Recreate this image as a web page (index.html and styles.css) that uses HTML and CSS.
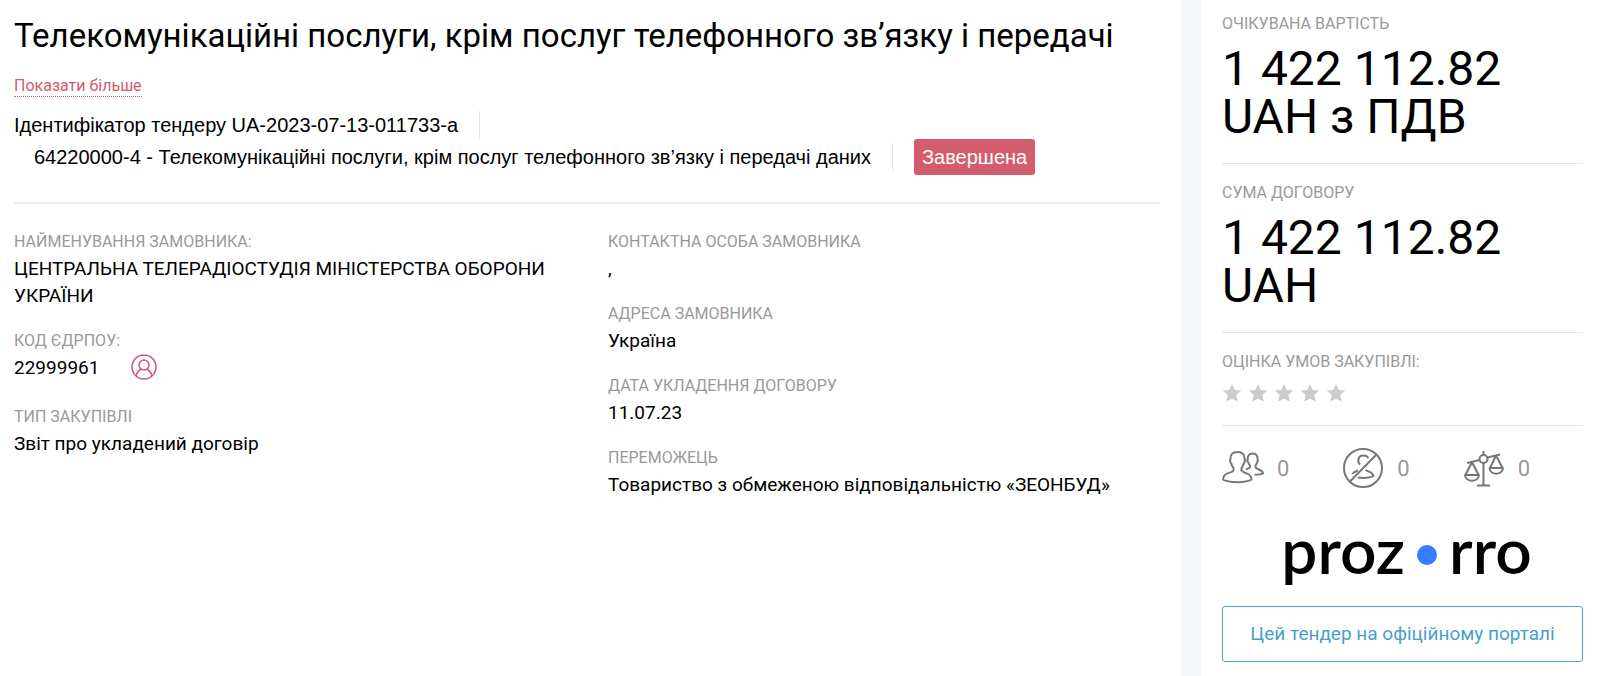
FILE: index.html
```html
<!DOCTYPE html>
<html lang="uk">
<head>
    <meta charset="UTF-8">
    <meta name="viewport" content="width=device-width, initial-scale=1.0">
    <title>Телекомунікаційні послуги</title>
    <link rel="stylesheet" href="styles.css">
</head>
<body>
    <main class="tender">
        <h1 class="title">Телекомунікаційні послуги, крім послуг телефонного зв’язку і передачі</h1>
        <button type="button" class="show-more">Показати більше</button>

        <div class="meta">
            <div class="meta-row">
                <span class="meta-item">Ідентифікатор тендеру UA-2023-07-13-011733-a</span>
            </div>
            <div class="meta-row">
                <span class="meta-item code">64220000-4 - Телекомунікаційні послуги, крім послуг телефонного зв’язку і передачі даних</span>
                <span class="status">Завершена</span>
            </div>
        </div>

        <div class="details">
            <dl class="column">
                <div class="field">
                    <dt>НАЙМЕНУВАННЯ ЗАМОВНИКА:</dt>
                    <dd>ЦЕНТРАЛЬНА ТЕЛЕРАДІОСТУДІЯ МІНІСТЕРСТВА ОБОРОНИ УКРАЇНИ</dd>
                </div>
                <div class="field">
                    <dt>КОД ЄДРПОУ:</dt>
                    <dd class="with-icon">
                        22999961
                        <a href="#" class="profile" aria-label="Профіль замовника">
                            <svg width="26" height="26" viewBox="0 0 26 26">
                                <circle cx="13" cy="13" r="12"/>
                                <circle cx="13" cy="11" r="5"/>
                                <path d="M5 22c1-4 3-6 5.500-6.800M21 22c-1-4-3-6-5.500-6.800"/>
                            </svg>
                        </a>
                    </dd>
                </div>
                <div class="field">
                    <dt>ТИП ЗАКУПІВЛІ</dt>
                    <dd>Звіт про укладений договір</dd>
                </div>
            </dl>
            <dl class="column">
                <div class="field">
                    <dt>КОНТАКТНА ОСОБА ЗАМОВНИКА</dt>
                    <dd>,</dd>
                </div>
                <div class="field">
                    <dt>АДРЕСА ЗАМОВНИКА</dt>
                    <dd>Україна</dd>
                </div>
                <div class="field">
                    <dt>ДАТА УКЛАДЕННЯ ДОГОВОРУ</dt>
                    <dd>11.07.23</dd>
                </div>
                <div class="field">
                    <dt>ПЕРЕМОЖЕЦЬ</dt>
                    <dd>Товариство з обмеженою відповідальністю «ЗЕОНБУД»</dd>
                </div>
            </dl>
        </div>
    </main>

    <aside class="sidebar">
        <section class="block">
            <h2 class="label">ОЧІКУВАНА ВАРТІСТЬ</h2>
            <p class="price">1 422 112.82 UAH з ПДВ</p>
        </section>
        <section class="block">
            <h2 class="label">СУМА ДОГОВОРУ</h2>
            <p class="price">1 422 112.82 UAH</p>
        </section>
        <section class="block">
            <h2 class="label">ОЦІНКА УМОВ ЗАКУПІВЛІ:</h2>
            <div class="stars">
                <svg viewBox="0 0 20 20"><path d="M10 1l2.700 6 6.600.600-5 4.400 1.500 6.500L10 15.700l-5.800 2.800L5.700 12l-5-4.400L7.300 7z"/></svg>
                <svg viewBox="0 0 20 20"><path d="M10 1l2.700 6 6.600.600-5 4.400 1.500 6.500L10 15.700l-5.800 2.800L5.700 12l-5-4.400L7.300 7z"/></svg>
                <svg viewBox="0 0 20 20"><path d="M10 1l2.700 6 6.600.600-5 4.400 1.500 6.500L10 15.700l-5.800 2.800L5.700 12l-5-4.400L7.300 7z"/></svg>
                <svg viewBox="0 0 20 20"><path d="M10 1l2.700 6 6.600.600-5 4.400 1.500 6.500L10 15.700l-5.800 2.800L5.700 12l-5-4.400L7.300 7z"/></svg>
                <svg viewBox="0 0 20 20"><path d="M10 1l2.700 6 6.600.600-5 4.400 1.500 6.500L10 15.700l-5.800 2.800L5.700 12l-5-4.400L7.300 7z"/></svg>
            </div>
        </section>

        <ul class="counters">
            <li>
                <svg viewBox="0 0 42 42">
                    <path d="M15.500 5C10.500 5 8 7.500 8.500 12.500c-1 .5-.5 3 .8 4 .4 2 1.200 3 2.200 4.500v2.500C9 27 1.500 25 1 32.500c5 3.500 23.500 3.500 28.500 0C29 25 21.500 27 19.500 23.500V21c1-1.500 1.800-2.500 2.200-4.500 1.300-1 1.800-3.500.8-4C23 7.500 20.500 5 15.500 5z"/>
                    <path d="M24 22.500c2-.7 3.500-1.200 4-2.200v-1.800c-1-1-1.600-2-1.800-3.300-.9-.7-1.200-2-.5-2.500-.2-4 1.500-6.200 5-6.200s5.200 2.200 4.800 6.200c.7.500.4 1.800-.4 2.500-.2 1.300-.8 2.300-1.600 3.300v1.800c1.200 2.200 7 2 7.500 6-1.500 1.200-4 1.500-8.500 1.500"/>
                </svg>
                0
            </li>
            <li>
                <svg viewBox="0 0 42 42">
                    <circle cx="21" cy="21" r="19"/>
                    <path d="M8 34.500L34 8"/>
                    <path d="M18 17.500c-2-2-2-3.500-1.500-4.500-.2-3 2-4.500 5-4.500 2.500 0 4.300 1 4.500 2.800"/>
                    <path d="M10.500 27c1-2.500 3.500-2.500 5.500-3.500M16 30.500c5 .8 12.500.5 15.500-1.500-.5-4-5.500-4.200-8-6"/>
                </svg>
                0
            </li>
            <li>
                <svg viewBox="0 0 42 42">
                    <circle cx="20.500" cy="12" r="4"/>
                    <path d="M20.500 4v4M20.500 16v22M14 38.500h13M4 16l12.500-3M24.500 10.500L37 7.500"/>
                    <path d="M9 15L2.500 28h13L9 15M2 28c.5 7.500 13.500 7.500 14 0z"/>
                    <path d="M33 8.500L27 21h12.500L33 8.500M26.500 21c.5 7.500 13 7.500 13.500 0z"/>
                </svg>
                0
            </li>
        </ul>

        <div class="logo" aria-label="prozorro">proz<span class="dot"></span>rro</div>
        <a href="#" class="portal-link">Цей тендер на офіційному порталі</a>
    </aside>
</body>
</html>
```
FILE: styles.css
```css
* {
    box-sizing: border-box;
}

body {
    font-family: Roboto, sans-serif;
    background-color: #f5f6f8;
    color: #000;
    display: grid;
    grid-template-columns: minmax(0, 1fr) 399px;
    gap: 20px;
    min-height: 100vh;
    margin: 0;
}

.tender {
    background: #fff;
    padding: 16px 21px 16px 14px;
}

.title {
    font-size: 33px;
    font-weight: 400;
    line-height: 40px;
    margin: 0 0 20px;
}

.show-more {
    display: block;
    font: 16px/20px Roboto, sans-serif;
    color: #d15c6c;
    background: none;
    border: none;
    border-bottom: 1px dotted #d15c6c;
    padding: 0;
    margin-bottom: 14px;
    cursor: pointer;
}

.meta {
    font: 20px/28px "Liberation Sans", Arial, sans-serif;
    padding-bottom: 27px;
    border-bottom: 2px solid #eee;
}

.meta-row {
    display: flex;
    align-items: center;
}

.meta-item {
    padding-right: 21px;
    border-right: 1px solid #e5e5e5;
}

.code {
    margin-left: 20px;
}

.status {
    background-color: #d35d6c;
    color: #fff;
    border-radius: 3px;
    line-height: 20px;
    padding: 8px;
    margin-left: 21px;
}

.details {
    display: grid;
    grid-template-columns: 1fr 1fr;
    gap: 42px;
    padding-top: 24px;
}

.column {
    margin: 0;
}

.field {
    margin-bottom: 18px;
}

.field dt,
.label {
    font-size: 16px;
    font-weight: 400;
    line-height: 27px;
    color: #999;
    margin: 0;
}

.field dd {
    font-size: 19px;
    line-height: 27px;
    margin: 0;
}

.field .with-icon {
    display: flex;
    gap: 32px;
    padding-bottom: 4px;
}

.profile {
    height: 26px;
}

.profile svg {
    display: block;
    fill: none;
    stroke: #cb5878;
    stroke-width: 1.5;
}

.sidebar {
    background: #fff;
    padding: 10px 17px 16px 21px;
}

.block {
    border-bottom: 1px solid #e6e6e6;
    padding-bottom: 22px;
    margin-bottom: 15px;
}

.price {
    font-size: 48px;
    line-height: 48px;
    margin: 8px 0 0;
}

.stars {
    display: flex;
    gap: 6px;
    padding-top: 8px;
}

.stars svg {
    width: 20px;
    height: 20px;
    fill: #ccc;
}

.counters {
    list-style: none;
    display: grid;
    grid-template-columns: repeat(3, 1fr);
    padding: 6px 0 0;
    margin: 0 0 25px;
}

.counters li {
    display: flex;
    align-items: center;
    gap: 13px;
    font-size: 22px;
    color: #999;
}

.counters svg {
    width: 42px;
    height: 42px;
    fill: none;
    stroke: #777;
    stroke-width: 2;
    stroke-linejoin: round;
}

.logo {
    display: flex;
    align-items: center;
    justify-content: center;
    font: 600 64px/72px Lato, sans-serif;
    padding-left: 8px;
    margin-bottom: 20px;
}

.dot {
    width: 20px;
    height: 20px;
    border-radius: 50%;
    background-color: #377dff;
    margin: 10px 12px 0;
}

.portal-link {
    display: block;
    border: 1px solid #4b9fc9;
    border-radius: 3px;
    color: #4b9fc9;
    font-size: 19px;
    line-height: 22px;
    padding: 16px;
    text-align: center;
    text-decoration: none;
}
```
